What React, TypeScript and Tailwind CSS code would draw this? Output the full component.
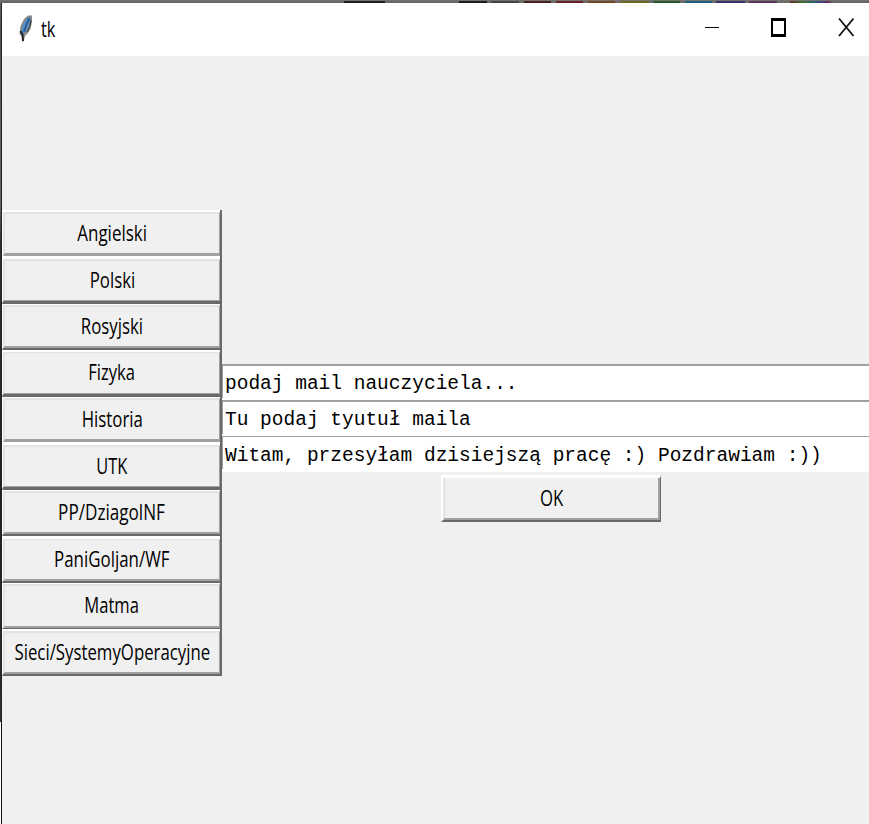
import React from "react";

type Row = {
  label: string;
  height: string;
  edges: string;
  inner: string;
  scale: string;
};

const rows: Row[] = [
  { label: "Angielski", height: "h-[46px]", edges: "border-t-2 border-b-0", inner: "border-t-2 border-b-3", scale: "scale-x-[0.81]" },
  { label: "Polski", height: "h-[48px]", edges: "border-t-3 border-b-3", inner: "border-t-2 border-b", scale: "scale-x-[0.80]" },
  { label: "Rosyjski", height: "h-[46px]", edges: "border-t border-b-2", inner: "border-t-2 border-b-2", scale: "scale-x-[0.80]" },
  { label: "Fizyka", height: "h-[47px]", edges: "border-t-2 border-b-3", inner: "border-t border-b", scale: "scale-x-[0.79]" },
  { label: "Historia", height: "h-[45px]", edges: "border-t border-b-0", inner: "border-t-2 border-b-3", scale: "scale-x-[0.80]" },
  { label: "UTK", height: "h-[48px]", edges: "border-t-3 border-b-3", inner: "border-t-2 border-b", scale: "scale-x-[0.78]" },
  { label: "PP/DziagolNF", height: "h-[46px]", edges: "border-t border-b-2", inner: "border-t-2 border-b-2", scale: "scale-x-[0.815]" },
  { label: "PaniGoljan/WF", height: "h-[47px]", edges: "border-t-3 border-b-2", inner: "border-t border-b-2", scale: "scale-x-[0.805]" },
  { label: "Matma", height: "h-[46px]", edges: "border-t border-b", inner: "border-t-2 border-b-2", scale: "scale-x-[0.79]" },
  { label: "Sieci/SystemyOperacyjne", height: "h-[47px]", edges: "border-t-2 border-b-2", inner: "border-t-2 border-b-2", scale: "scale-x-[0.80]" },
];

const entries = [
  { text: "podaj mail nauczyciela...", top: "border-t-2", pad: "pt-[2px]" },
  { text: "Tu podaj tyutuł maila", top: "border-t-2", pad: "pt-[2px]" },
  { text: "Witam, przesyłam dzisiejszą pracę :) Pozdrawiam :))", top: "border-t", pad: "pt-[3px]" },
];

function SubjectButton({ label, height, edges, inner, scale }: Row) {
  return (
    <div className={`flex ${height} w-[218px] border-l border-t-white border-l-white border-b-[#696969] ${edges}`}>
      <button
        className={`flex min-w-0 flex-1 items-center justify-center border-r border-l-2 border-t-[#e3e3e3] border-l-[#e3e3e3] border-r-[#a0a0a0] border-b-[#a0a0a0] bg-[#f0f0f0] pb-[2px] ${inner}`}
      >
        <span className={`block shrink-0 whitespace-nowrap leading-6 ${scale}`}>{label}</span>
      </button>
    </div>
  );
}

export default function App() {
  return (
    <div className="flex h-[824px] w-[869px] flex-col overflow-hidden bg-[#f0f0f0] font-['Open_Sans','Noto_Sans',sans-serif] text-[21px] text-black">
      <div className="h-[3px] shrink-0 border-t border-[#74706c] bg-[linear-gradient(90deg,#666_0_344px,#1f1f1f_344px_385px,#686868_385px_459px,#1c1c1c_459px_487px,#6b6b6b_487px_491px,#444_491px_519px,#6b6b6b_519px_524px,#4e2022_524px_551px,#6b6b6b_551px_556px,#6b2025_556px_583px,#6b6b6b_583px_588px,#70451f_588px_615px,#6b6b6b_615px_620px,#6d6a20_620px_649px,#6b6b6b_649px_653px,#245a2c_653px_680px,#6b6b6b_680px_685px,#17617e_685px_712px,#6b6b6b_712px_716px,#33336f_716px_745px,#6b6b6b_745px_749px,#5c335f_749px_777px,#6b6b6b_777px_790px,#6b2a2a_790px,#40702b_803px,#235c80_816px,#6b2766_828px,#666_832px)]" />
      <div className="flex flex-1">
        <div className="flex w-[2px] flex-col">
          <div className="h-[719px] border-r border-[#222] bg-[linear-gradient(180deg,#606060_0,#555_30px,#666_200px,#303030_240px,#222_500px,#303030_719px)]" />
          <div className="flex-1 border-r border-l border-l-white border-r-[#111]" />
        </div>
        <main className="flex w-[867px] flex-col">
          <header className="flex h-[53px] items-center bg-white">
            <svg className="mt-[-1px] ml-[16px] h-[30px] w-[15px]" viewBox="0 0 15 30">
              <path d="M10 1.5 L14 1.5 L14 8 L12.5 15 L10 19 L7 22 L6 26 L4.5 28.5 L4 23 L1.5 20 L2.5 12 L6 5Z" fill="#8b8b8b" />
              <path d="M10 3.5 L12.5 3 L11.5 10 L8.5 17 L5 20 L3.5 16 L5 10Z" fill="#4d8bcb" />
              <path d="M11.5 4 L8.5 10 L6 18" stroke="#2b5486" strokeWidth="1.5" fill="none" />
              <path d="M12.8 6 L12 12 L9 18" stroke="#333" strokeWidth="1" fill="none" />
              <path d="M2.5 17 L4.5 20.5 L5 27" stroke="#222" strokeWidth="2" fill="none" />
            </svg>
            <span className="ml-2 origin-left scale-x-[0.78] pb-px leading-6">tk</span>
            <svg className="ml-auto h-[53px] w-[189px]" viewBox="0 0 189 53" shapeRendering="crispEdges">
              <path d="M25 24.5H39" stroke="#000" />
              <path d="M91 15h15v19H91zM93 18v13h11V18z" fill="#000" fillRule="evenodd" />
              <path d="M159 15.5L173.5 33M173.5 15.5L159 33" stroke="#111" strokeWidth="1.8" shapeRendering="auto" />
            </svg>
          </header>
          <div className="flex flex-1">
            <nav className="mt-[154px] h-[466px] w-[220px] shrink-0 border-r-2 border-[#696969]">
              {rows.map((row) => (
                <SubjectButton key={row.label} {...row} />
              ))}
            </nav>
            <section className="mt-[308px] flex min-w-0 flex-1 flex-col">
              {entries.map((e) => (
                <div key={e.text} className={`flex h-9 border-t-[#a0a0a0] bg-white ${e.top}`}>
                  <div className="h-8 w-px bg-[#a0a0a0]" />
                  <span className={`ml-[2px] whitespace-pre font-['Liberation_Mono',monospace] text-[19.5px] leading-8 ${e.pad}`}>
                    {e.text}
                  </span>
                </div>
              ))}
              <div className="mt-[3px] ml-[219px] flex h-[47px] w-[220px] border-t-3 border-r border-b-2 border-l-2 border-t-white border-r-[#696969] border-b-[#696969] border-l-white">
                <button className="flex flex-1 items-center justify-center border-r-2 border-b-2 border-l-2 border-r-[#a0a0a0] border-b-[#a0a0a0] border-l-[#e3e3e3]">
                  <span className="block scale-x-[0.8] leading-6">OK</span>
                </button>
              </div>
            </section>
          </div>
        </main>
      </div>
    </div>
  );
}
